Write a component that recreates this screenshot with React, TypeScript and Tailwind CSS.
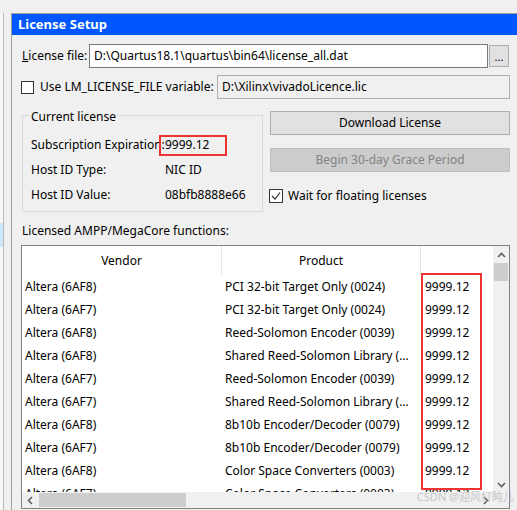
import React from 'react'

const ROWS = [
  ['Altera (6AF8)', 'PCI 32-bit Target Only (0024)'],
  ['Altera (6AF7)', 'PCI 32-bit Target Only (0024)'],
  ['Altera (6AF8)', 'Reed-Solomon Encoder (0039)'],
  ['Altera (6AF8)', 'Shared Reed-Solomon Library (0039)'],
  ['Altera (6AF7)', 'Reed-Solomon Encoder (0039)'],
  ['Altera (6AF7)', 'Shared Reed-Solomon Library (0039)'],
  ['Altera (6AF8)', '8b10b Encoder/Decoder (0079)'],
  ['Altera (6AF7)', '8b10b Encoder/Decoder (0079)'],
  ['Altera (6AF8)', 'Color Space Converters (0003)'],
  ['Altera (6AF7)', 'Color Space Converters (0003)'],
]

const Chevron = ({ dir }: { dir: 'up' | 'down' | 'left' | 'right' }) => {
  const d = {
    up: 'M1 6 L4.5 2.5 L8 6',
    down: 'M1 3 L4.5 6.5 L8 3',
    left: 'M6 1 L2.5 4.5 L6 8',
    right: 'M3 1 L6.5 4.5 L3 8',
  }[dir]
  return (
    <svg width="9" height="9" viewBox="0 0 9 9">
      <path d={d} fill="none" stroke="#606060" strokeWidth="1.6" />
    </svg>
  )
}

export default function App() {
  return (
    <div
      className="relative flex w-[517px] h-[510px] overflow-hidden bg-[#f0f0f0] text-[12px] text-black"
      style={{ fontFamily: '"Noto Sans", "Noto Sans CJK SC", sans-serif' }}
    >
      {/* left neighbour panel edge */}
      <div className="mt-[13px] w-[4px] shrink-0 bg-[#f7f7f7] border-r border-[#b9b9b9]">
        <div className="mt-[210px] h-[24px] bg-[#cce8ff]" />
      </div>
      <div className="w-[7px] shrink-0" />

      {/* dialog */}
      <div className="mt-[13px] flex-1 flex flex-col border-l border-t border-[#a0a0a0]">
        <div className="h-[21px] shrink-0 bg-[#0057ff] flex items-center pl-[6px] text-white font-bold text-[13px]">
          License Setup
        </div>

        <div className="flex flex-col pl-[10px] pr-[8px]">
          {/* license file */}
          <div className="mt-[9px] h-[24px] flex items-center">
            <span className="w-[67px] shrink-0">
              <span className="underline">L</span>icense file:
            </span>
            <div className="w-[399px] h-[24px] border border-[#7a7a7a] bg-white flex items-center pl-[4px]">
              D:\Quartus18.1\quartus\bin64\license_all.dat
            </div>
            <div className="ml-[1px] w-[20px] h-[22px] border border-[#adadad] bg-[#e1e1e1] flex items-center justify-center text-[11px] leading-none">
              ...
            </div>
          </div>

          {/* LM_LICENSE_FILE */}
          <div className="mt-[7px] h-[24px] flex items-center">
            <div className="-ml-px w-[13px] h-[13px] border border-[#333] bg-white shrink-0" />
            <span className="ml-[6px] w-[177px] shrink-0">Use LM_LICENSE_FILE variable:</span>
            <div className="flex-1 h-[24px] border border-[#adadad] bg-[#f0f0f0] flex items-center pl-[4px]">
              D:\Xilinx\vivadoLicence.lic
            </div>
          </div>

          {/* current license + buttons */}
          <div className="mt-[12px] flex">
            <div className="relative mt-[4px] w-[241px] h-[97px] border border-[#d9d9d9] shrink-0">
              <span className="absolute -top-[7px] left-[7px] px-[1px] bg-[#f0f0f0] leading-[16px]">
                Current license
              </span>
              <div className="flex flex-col pl-[8px] pt-[21px] gap-[9px]">
                <div className="flex items-center h-[16px]">
                  <span className="w-[134px] shrink-0">Subscription Expiration:</span>
                  <span className="-ml-[6px] h-[21px] w-[68px] border-2 border-[#ee3333] pl-[4px] flex items-center">
                    9999.12
                  </span>
                </div>
                <div className="flex items-center h-[16px]">
                  <span className="w-[134px] shrink-0">Host ID Type:</span>
                  <span>NIC ID</span>
                </div>
                <div className="flex items-center h-[16px]">
                  <span className="w-[134px] shrink-0">Host ID Value:</span>
                  <span>08bfb8888e66</span>
                </div>
              </div>
            </div>

            <div className="ml-[7px] flex-1 flex flex-col">
              <div className="h-[24px] border border-[#adadad] bg-[#e1e1e1] flex items-center justify-center">
                Download License
              </div>
              <div className="mt-[13px] h-[24px] border border-[#bfbfbf] bg-[#cccccc] text-[#838383] flex items-center justify-center">
                Begin 30-day Grace Period
              </div>
              <div className="mt-[15px] flex items-center">
                <div className="-ml-px w-[14px] h-[14px] border border-[#333] bg-white flex items-center justify-center">
                  <svg width="10" height="10" viewBox="0 0 10 10">
                    <path d="M1 5 L4 8 L9 1.5" fill="none" stroke="#333" strokeWidth="1.2" />
                  </svg>
                </div>
                <span className="ml-[5px]">Wait for floating licenses</span>
              </div>
            </div>
          </div>

          <div className="mt-[11px] leading-[16px]">Licensed AMPP/MegaCore functions:</div>

          {/* table */}
          <div className="relative mt-[6px] -ml-px w-[489px] h-[264px] border border-[#828282] bg-white flex">
            <div className="w-[471px] flex flex-col">
              <div className="flex-1 overflow-hidden">
                <div className="flex h-[29px]">
                  <div className="w-[200px] flex items-center justify-center border-r border-[#e5e5e5]">Vendor</div>
                  <div className="w-[199px] flex items-center justify-center border-r border-[#e5e5e5]">Product</div>
                  <div className="flex-1" />
                </div>
                {ROWS.map(([v, p], i) => (
                  <div key={i} className="flex h-[23px] items-center whitespace-nowrap">
                    <div className="w-[200px] pl-[3px]">{v}</div>
                    <div className="w-[200px] pl-[3px] flex">
                      <span className="w-[190px] truncate">{p}</span>
                    </div>
                    <div className="pl-[3px]">9999.12</div>
                  </div>
                ))}
              </div>
              {/* horizontal scrollbar */}
              <div className="h-[16px] bg-[#f0f0f0] flex items-center">
                <div className="w-[16px] flex justify-center"><Chevron dir="left" /></div>
                <div className="ml-[1px] w-[147px] h-[14px] bg-[#cdcdcd]" />
                <div className="flex-1" />
                <div className="w-[16px] flex justify-center"><Chevron dir="right" /></div>
              </div>
            </div>
            {/* vertical scrollbar */}
            <div className="w-[16px] bg-[#f0f0f0] flex flex-col">
              <div className="h-[16px] mt-[1px] flex items-center justify-center"><Chevron dir="up" /></div>
              <div className="mx-[1px] h-[18px] bg-[#cdcdcd]" />
              <div className="flex-1" />
              <div className="h-[16px] mb-[16px] flex items-center justify-center"><Chevron dir="down" /></div>
            </div>

            {/* annotation box */}
            <div className="absolute left-[399px] top-[27px] w-[61px] h-[217px] border-2 border-[#ee3333]" />
          </div>
        </div>
      </div>

      <div className="absolute right-[3px] bottom-[5px] text-[11px] text-[#c4c4c4] opacity-90">
        CSDN @迎风打盹儿
      </div>
    </div>
  )
}
